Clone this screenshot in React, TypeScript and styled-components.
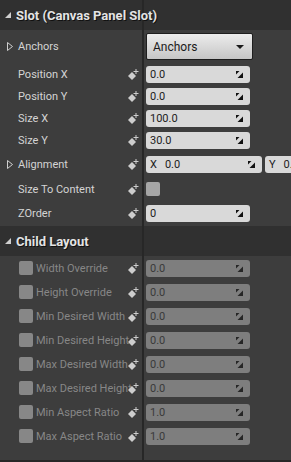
import styled, { createGlobalStyle, css } from "styled-components"

const GlobalStyle = createGlobalStyle`
  html, body {
    margin: 0;
    padding: 0;
    background: #3d3d3d;
  }
  body {
    font-family: Roboto, "Liberation Sans", sans-serif;
  }
`

// vertical splitter between the name and value columns
const splitter = css`
  background-image: linear-gradient(
    to right,
    transparent 142px,
    #272727 142px,
    #272727 144px,
    transparent 144px
  );
`

const Panel = styled.div`
  width: 291px;
  height: 462px;
  overflow: hidden;
  background-color: #3d3d3d;
  ${splitter}
  display: flex;
  flex-direction: column;
`

const SectionHeader = styled.div`
  height: 30px;
  flex-shrink: 0;
  display: flex;
  align-items: center;
  gap: 5px;
  padding-left: 5px;
  background-color: #303030;
  ${splitter}
  color: #e4e4e4;
  font-size: 13px;
  font-weight: 700;
  text-shadow: 1px 1px 0 #111;
  white-space: nowrap;
`

const Row = styled.div<{ $h: number }>`
  height: ${(p) => p.$h}px;
  flex-shrink: 0;
  display: flex;
  align-items: center;
`

const NameCell = styled.div<{ $pad: number }>`
  width: 142px;
  height: 100%;
  box-sizing: border-box;
  padding-left: ${(p) => p.$pad}px;
  padding-right: 3px;
  display: flex;
  align-items: center;
  overflow: hidden;
  flex-shrink: 0;
`

const Expander = styled.span`
  width: 13px;
  flex-shrink: 0;
  display: flex;
  align-items: center;
  padding-left: 2px;
  box-sizing: border-box;
`

const Label = styled.span<{ $disabled?: boolean }>`
  flex: 1;
  min-width: 0;
  white-space: nowrap;
  font-size: 11px;
  color: ${(p) => (p.$disabled ? "#878787" : "#d4d4d4")};
`

const KeyIcon = styled.svg`
  flex-shrink: 0;
  position: relative;
  z-index: 1;
`

const ValueCell = styled.div`
  flex: 1;
  height: 100%;
  padding-left: 4px;
  display: flex;
  align-items: center;
  gap: 3px;
  overflow: hidden;
`

const NumberBox = styled.div<{ $w: number; $disabled?: boolean }>`
  width: ${(p) => p.$w}px;
  height: 17px;
  flex-shrink: 0;
  box-sizing: border-box;
  border-radius: 3px;
  background: ${(p) => (p.$disabled ? "#7e7e7e" : "#d9d9d9")};
  color: ${(p) => (p.$disabled ? "#3a3a3a" : "#1c1c1c")};
  font-size: 11px;
  display: flex;
  align-items: center;
  padding: 0 7px 0 4px;
  gap: 8px;
`

const BoxValue = styled.span`
  flex: 1;
  white-space: nowrap;
`

const ComboButton = styled.div`
  width: 107px;
  height: 27px;
  box-sizing: border-box;
  border: 1px solid #1e1e1e;
  border-radius: 2px;
  background: linear-gradient(to bottom, #ececec, #c6c6c6);
  color: #1a1a1a;
  font-size: 12px;
  display: flex;
  align-items: center;
  justify-content: space-between;
  padding: 0 8px 0 6px;
`

const CheckBox = styled.div<{ $disabled?: boolean }>`
  width: 14px;
  height: 14px;
  flex-shrink: 0;
  border-radius: 2px;
  background: ${(p) => (p.$disabled ? "#878787" : "#a6a6a6")};
  margin-right: ${(p) => (p.$disabled ? 3 : 0)}px;
`

const Filler = styled.div`
  flex: 1;
  border-bottom: 2px solid #272727;
`

const HeaderArrow = () => (
  <svg width="6" height="6" viewBox="0 0 6 6">
    <polygon points="6,0 6,6 0,6" fill="#cfcfcf" />
  </svg>
)

const ExpandArrow = () => (
  <svg width="6" height="9" viewBox="0 0 6 9">
    <polygon points="0.5,0.5 5.5,4.5 0.5,8.5" fill="none" stroke="#cfcfcf" strokeWidth="1" />
  </svg>
)

const KeyFrame = () => (
  <KeyIcon width="11" height="11" viewBox="0 0 11 11">
    <polygon points="0,7 4,3 8,7 4,11" fill="#cdcdcd" />
    <polygon points="3,6 5,4 6,5 4,7" fill="#3d3d3d" opacity="0" />
    <rect x="7.5" y="0" width="1" height="5" fill="#cdcdcd" />
    <rect x="5.5" y="2" width="5" height="1" fill="#cdcdcd" />
  </KeyIcon>
)

const SpinGrip = ({ color }: { color: string }) => (
  <svg width="7" height="7" viewBox="0 0 7 7">
    <polygon points="0,0 3.5,0 0,3.5" fill={color} />
    <polygon points="7,1.5 7,7 1.5,7" fill={color} />
  </svg>
)

const DropArrow = () => (
  <svg width="8" height="4" viewBox="0 0 8 4">
    <polygon points="0,0 8,0 4,4" fill="#1a1a1a" />
  </svg>
)

function Num({ value, width = 104, disabled, prefix }: { value: string; width?: number; disabled?: boolean; prefix?: string }) {
  return (
    <NumberBox $w={width} $disabled={disabled}>
      {prefix && <span>{prefix}</span>}
      <BoxValue>{value}</BoxValue>
      <SpinGrip color={disabled ? "#262626" : "#111"} />
    </NumberBox>
  )
}

const slotRows = [
  { name: "Position X", value: "0.0", h: 22 },
  { name: "Position Y", value: "0.0", h: 22 },
  { name: "Size X", value: "100.0", h: 22 },
  { name: "Size Y", value: "30.0", h: 23 },
]

const childRows = [
  { name: "Width Override", value: "0.0" },
  { name: "Height Override", value: "0.0" },
  { name: "Min Desired Width", value: "0.0" },
  { name: "Min Desired Height", value: "0.0" },
  { name: "Max Desired Width", value: "0.0" },
  { name: "Max Desired Height", value: "0.0" },
  { name: "Min Aspect Ratio", value: "1.0" },
  { name: "Max Aspect Ratio", value: "1.0" },
]

export default function App() {
  return (
    <>
      <GlobalStyle />
      <Panel>
        <SectionHeader>
          <HeaderArrow />
          Slot (Canvas Panel Slot)
        </SectionHeader>

        <Row $h={33}>
          <NameCell $pad={5}>
            <Expander><ExpandArrow /></Expander>
            <Label>Anchors</Label>
          </NameCell>
          <ValueCell>
            <ComboButton>
              Anchors
              <DropArrow />
            </ComboButton>
          </ValueCell>
        </Row>

        {slotRows.map((r) => (
          <Row key={r.name} $h={r.h}>
            <NameCell $pad={5}>
              <Expander />
              <Label>{r.name}</Label>
              <KeyFrame />
            </NameCell>
            <ValueCell>
              <Num value={r.value} />
            </ValueCell>
          </Row>
        ))}

        <Row $h={25}>
          <NameCell $pad={5}>
            <Expander><ExpandArrow /></Expander>
            <Label>Alignment</Label>
            <KeyFrame />
          </NameCell>
          <ValueCell>
            <Num prefix="X" value="0.0" width={116} />
            <Num prefix="Y" value="0.0" width={116} />
          </ValueCell>
        </Row>

        <Row $h={24}>
          <NameCell $pad={5}>
            <Expander />
            <Label>Size To Content</Label>
            <KeyFrame />
          </NameCell>
          <ValueCell>
            <CheckBox />
          </ValueCell>
        </Row>

        <Row $h={25}>
          <NameCell $pad={5}>
            <Expander />
            <Label>ZOrder</Label>
            <KeyFrame />
          </NameCell>
          <ValueCell>
            <Num value="0" />
          </ValueCell>
        </Row>

        <SectionHeader>
          <HeaderArrow />
          Child Layout
        </SectionHeader>

        {childRows.map((r) => (
          <Row key={r.name} $h={24}>
            <NameCell $pad={19}>
              <CheckBox $disabled />
              <Label $disabled>{r.name}</Label>
              <KeyFrame />
            </NameCell>
            <ValueCell>
              <Num value={r.value} disabled />
            </ValueCell>
          </Row>
        ))}

        <Filler />
      </Panel>
    </>
  )
}
